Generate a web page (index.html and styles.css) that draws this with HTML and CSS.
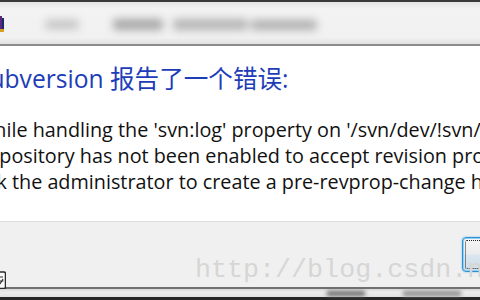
FILE: index.html
```html
<!DOCTYPE html>
<html>
<head>
<meta charset="utf-8">
<link rel="stylesheet" href="styles.css">
</head>
<body>
<div class="screen">
  <div class="topbar">
    <svg class="app-icon" width="6" height="16" viewBox="0 0 6 16"><rect x="0" y="0" width="3" height="16" fill="#5a2a7a"/><rect x="3" y="2" width="2" height="13" fill="#1b2a6b"/><rect x="0" y="13" width="5" height="3" fill="#d8a020"/></svg>
    <div class="blurrow">
      <span class="blob b1"></span>
      <span class="blob b2"></span>
      <span class="blob b3"></span>
      <span class="blob b4"></span>
    </div>
  </div>
  <div class="content">
    <div class="inner">
      <h1 class="title">Subversion 报告了一个错误:</h1>
      <p class="line">While handling the 'svn:log' property on '/svn/dev/!svn/bln/1024':</p>
      <p class="line">Repository has not been enabled to accept revision propchanges;</p>
      <p class="line">ask the administrator to create a pre-revprop-change hook</p>
    </div>
  </div>
  <div class="footer">
    <svg class="foot-icon" width="7" height="18" viewBox="0 0 7 18"><path d="M0 1 H5 Q6.5 1 6.5 3 V16 Q6.5 17.5 5 17.5 H0" fill="#fafafa" stroke="#2a2a2a" stroke-width="1.5"/><path d="M0 6 H4 M0 10 H4.5 M1 13 L4 8" stroke="#333" stroke-width="1.2" fill="none"/></svg>
    <button class="btn"><span class="focus"></span></button>
    <span class="watermark">http://blog.csdn.net</span>
  </div>
  <div class="bottombar">
    <span class="bblob c1"></span>
    <span class="bblob c2"></span>
  </div>
</div>
</body>
</html>
```

FILE: styles.css
```css
html, body {
  margin: 0;
  padding: 0;
  background: #ffffff;
}
.screen {
  width: 480px;
  height: 300px;
  overflow: hidden;
  display: flex;
  flex-direction: column;
  font-family: "Open Sans", "Noto Sans CJK SC", sans-serif;
}
.topbar {
  height: 42px;
  border-top: 2px solid #3a3a3a;
  border-bottom: 2px solid #8c8c8c;
  background: linear-gradient(#e4e4e4, #f3f3f3 15%, #f1f1f1 85%, #e0e0e0);
  display: flex;
  align-items: center;
  overflow: hidden;
  flex: none;
}
.app-icon {
  margin-left: -1px;
  margin-top: 2px;
  flex: none;
}
.blurrow {
  display: flex;
  align-items: center;
  margin-left: 40px;
  margin-top: 3px;
  filter: blur(4px);
}
.blob {
  display: block;
  height: 9px;
  background: #acacac;
  border-radius: 4px;
}
.b1 { width: 34px; background: #c2c2c2; }
.b2 { width: 50px; margin-left: 34px; height: 11px; background: #a6a6a6; }
.b3 { width: 75px; margin-left: 10px; height: 11px; background: #b4b4b4; }
.b4 { width: 66px; margin-left: 3px; height: 10px; background: #aeaeae; }
.content {
  height: 175px;
  background: #ffffff;
  flex: none;
  overflow: hidden;
}
.inner {
  margin-left: -24px;
  padding-top: 16px;
  white-space: nowrap;
}
.title {
  margin: 0;
  font-weight: normal;
  font-size: 24.6px;
  line-height: 34px;
  color: #1d3db8;
}
.line {
  margin: 0;
  font-size: 19.8px;
  line-height: 26px;
  color: #111111;
}
.title + .line {
  margin-top: 21px;
}
.footer {
  position: relative;
  height: 65px;
  border-top: 1px solid #dcdcdc;
  background: #f0f0f0;
  display: flex;
  align-items: flex-start;
  justify-content: space-between;
  flex: none;
}
.foot-icon {
  align-self: flex-end;
  margin-bottom: -2px;
  margin-left: -1px;
}
.btn {
  margin-top: 15px;
  margin-right: -58px;
  width: 76px;
  height: 35px;
  padding: 2px;
  border: 1px solid #2f8fd0;
  border-radius: 4px;
  box-shadow: 0 0 0 1px #8fd0f4 inset, 0 0 2px #68b8e8;
  background: linear-gradient(#f6f6f6, #ececec 48%, #d9e6ef 52%, #cfdde8);
  display: flex;
}
.focus {
  flex: 1;
  border: 1px dotted #222;
  border-radius: 2px;
}
.watermark {
  position: absolute;
  left: 195px;
  top: 33px;
  font-family: "Liberation Mono", monospace;
  font-size: 26.7px;
  line-height: 30px;
  color: #d6d6d6;
  white-space: nowrap;
}
.bottombar {
  flex: 1;
  border-top: 2px solid #707070;
  border-bottom: 3px solid #262626;
  background: linear-gradient(#d8d8d8, #ececec 40%, #e2e2e2);
  display: flex;
  align-items: center;
}
.bblob {
  display: block;
  height: 5px;
  background: #6a6a6a;
  filter: blur(2px);
}
.c1 { width: 38px; margin-left: 327px; }
.c2 { width: 58px; margin-left: 38px; background: #8a8a8a; }
```
